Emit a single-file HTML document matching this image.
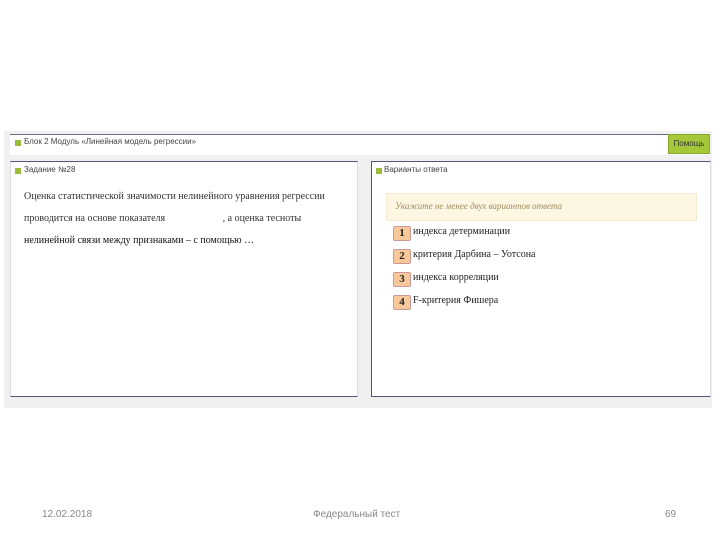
<!DOCTYPE html>
<html><head><meta charset="utf-8"><style>
body{margin:0;width:720px;height:540px;background:#fff;position:relative;overflow:hidden;font-family:"Liberation Serif","DejaVu Serif",serif}
.abs{position:absolute}
.gray{left:4px;top:131px;width:708px;height:277px;background:#f0f0f0}
.bar{left:10px;top:134px;width:700px;height:20px;background:#fff;border-top:1px solid #6a6a80}
.sq{width:6px;height:6px;background:#9bbb3b}
.small{font-family:"Liberation Sans",sans-serif;font-size:8px;color:#444}
.panel{background:#fff;border-top:1px solid #55557a;border-bottom:1px solid #55557a}
.num{width:16px;height:13px;background:#f9c89a;border:1px solid #c99;border-radius:2px;font-weight:bold;font-size:11px;text-align:center;line-height:13px;color:#222}
.opt{font-size:10px;color:#222}
</style></head><body>
<div class="abs gray"></div>
<div class="abs bar"></div>
<div class="abs sq" style="left:15px;top:140px"></div>
<div class="abs small" style="left:24px;top:137px">Блок 2 Модуль «Линейная модель регрессии»</div>
<div class="abs" style="left:668px;top:134px;width:40px;height:18px;background:#a5c83a;border:1px solid #8aa830;font-family:'Liberation Sans',sans-serif;font-size:8px;line-height:18px;text-align:center;color:#333">Помощь</div>

<div class="abs panel" style="left:10px;top:161px;width:346px;height:234px;border-left:1px solid #ddd;border-right:1px solid #ddd"></div>
<div class="abs sq" style="left:15px;top:168px"></div>
<div class="abs small" style="left:24px;top:165px">Задание №28</div>
<div class="abs" style="left:24px;top:186px;font-size:10px;color:#333;line-height:22px;width:330px">Оценка статистической значимости нелинейного уравнения регрессии<br>проводится на основе показателя &nbsp;&nbsp;&nbsp;&nbsp;&nbsp;&nbsp;&nbsp;&nbsp;&nbsp;&nbsp;&nbsp;&nbsp;&nbsp;&nbsp;&nbsp;&nbsp;&nbsp;&nbsp;&nbsp;&nbsp;&nbsp; , а оценка тесноты<br><span style="color:#111">нелинейной связи между признаками – с помощью …</span></div>

<div class="abs panel" style="left:371px;top:161px;width:338px;height:234px;border-left:1px solid #55557a;border-right:1px solid #ddd"></div>
<div class="abs sq" style="left:376px;top:168px"></div>
<div class="abs small" style="left:384px;top:165px">Варианты ответа</div>
<div class="abs" style="left:386px;top:193px;width:309px;height:26px;background:#fdf6e3;border:1px solid #f3ead0"></div>
<div class="abs" style="left:395px;top:201px;font-size:9px;font-style:italic;color:#a08c60">Укажите не менее двух вариантов ответа</div>
<div class="abs num" style="left:393px;top:226px">1</div><div class="abs opt" style="left:413px;top:226px">индекса детерминации</div>
<div class="abs num" style="left:393px;top:249px">2</div><div class="abs opt" style="left:413px;top:249px">критерия Дарбина – Уотсона</div>
<div class="abs num" style="left:393px;top:272px">3</div><div class="abs opt" style="left:413px;top:272px">индекса корреляции</div>
<div class="abs num" style="left:393px;top:295px">4</div><div class="abs opt" style="left:413px;top:295px">F-критерия Фишера</div>

<div class="abs" style="left:42px;top:509px;font-family:'Liberation Sans',sans-serif;font-size:10px;color:#888">12.02.2018</div>
<div class="abs" style="left:313px;top:509px;font-family:'Liberation Sans',sans-serif;font-size:10px;color:#888">Федеральный тест</div>
<div class="abs" style="left:665px;top:509px;font-family:'Liberation Sans',sans-serif;font-size:10px;color:#888">69</div>
</body></html>
